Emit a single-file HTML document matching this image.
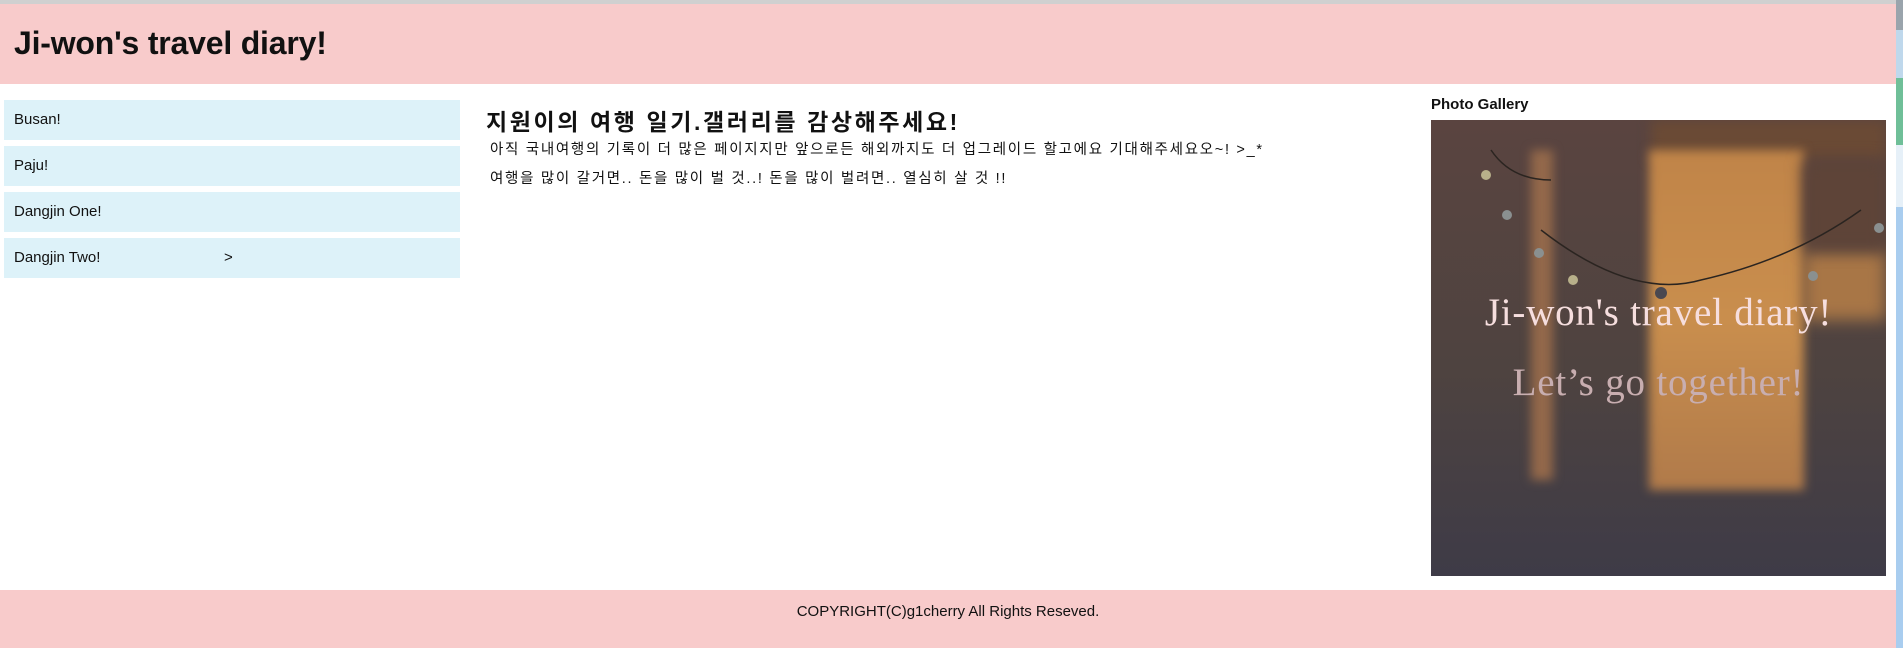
<!DOCTYPE html>
<html><head><meta charset="utf-8"><style>
*{margin:0;padding:0;box-sizing:border-box}
body{width:1903px;height:648px;overflow:hidden;background:#fff;position:relative;font-family:"Liberation Sans","Noto Sans CJK KR",sans-serif;color:#111}
.topline{position:absolute;left:0;top:0;width:1896px;height:4px;background:#d0d0d0}
header{position:absolute;left:0;top:4px;width:1896px;height:80px;background:#f8cbcb}
header h1{position:absolute;left:14px;top:21px;font-size:32px;font-weight:bold;letter-spacing:-0.2px}
.menu{position:absolute;left:4px;width:456px;height:40px;background:#ddf2f9;font-size:15px;padding-left:10px;line-height:40px}
h2{position:absolute;left:486px;top:103px;font-size:23px;font-weight:bold;letter-spacing:2.6px}
p{position:absolute;left:490px;font-size:14.5px;letter-spacing:1.7px}
.pg{position:absolute;left:1431px;top:96px;font-size:15px;font-weight:bold}
.img{position:absolute;left:1431px;top:120px;width:455px;height:456px;overflow:hidden;background:linear-gradient(180deg,#5a4440 0%,#4e4340 55%,#3e3b47 100%)}
.img div{position:absolute}
footer{position:absolute;left:0;top:590px;width:1896px;height:58px;background:#f8cbcb;text-align:center;font-size:15px;line-height:44px}
.sb{position:absolute;left:1896px;top:0;width:7px;height:648px;background:#a9cdef}
</style></head><body>
<div class="topline"></div>
<header><h1>Ji-won's travel diary!</h1></header>
<div class="menu" style="top:100px">Busan!</div>
<div class="menu" style="top:146px">Paju!</div>
<div class="menu" style="top:192px">Dangjin One!</div>
<div class="menu" style="top:238px">Dangjin Two!<span style="position:absolute;left:220px">&gt;</span></div>
<h2>지원이의 여행 일기.갤러리를 감상해주세요!</h2>
<p style="top:138px">아직 국내여행의 기록이 더 많은 페이지지만 앞으로든 해외까지도 더 업그레이드 할고에요 기대해주세요오~! &gt;_*</p>
<p style="top:167px">여행을 많이 갈거면.. 돈을 많이 벌 것..! 돈을 많이 벌려면.. 열심히 살 것 !!</p>
<div class="pg">Photo Gallery</div>
<div class="img">
 <div style="left:220px;top:0;width:235px;height:40px;background:#6a4a35;filter:blur(6px)"></div>
 <div style="left:218px;top:30px;width:155px;height:340px;background:linear-gradient(180deg,#c08448,#c98e4d 50%,#b07a4a);filter:blur(5px)"></div>
 <div style="left:372px;top:130px;width:83px;height:70px;background:#a87646;filter:blur(8px)"></div>
 <div style="left:100px;top:30px;width:22px;height:330px;background:#93684a;filter:blur(5px)"></div>
 <div style="left:372px;top:40px;width:83px;height:90px;background:#5e4438;filter:blur(8px)"></div>
 <svg style="position:absolute;left:0;top:0" width="455" height="456"><path d="M60 30 Q80 60 120 60 M110 110 Q200 180 270 160 Q360 140 430 90" stroke="#2a2420" stroke-width="1.5" fill="none"/>
 <circle cx="55" cy="55" r="5" fill="#b8b08a"/><circle cx="76" cy="95" r="5" fill="#8a9090"/><circle cx="108" cy="133" r="5" fill="#8a9090"/><circle cx="142" cy="160" r="5" fill="#b8b08a"/><circle cx="230" cy="173" r="6" fill="#4a4850"/><circle cx="382" cy="156" r="5" fill="#8a9090"/><circle cx="448" cy="108" r="5" fill="#8a9090"/></svg>
 <div style="left:0;width:455px;top:170px;text-align:center;font-family:'Liberation Serif',serif;font-size:39px;letter-spacing:0.8px;color:#f6dede">Ji-won's travel diary!</div>
 <div style="left:0;width:455px;top:240px;text-align:center;font-family:'Liberation Serif',serif;font-size:39px;letter-spacing:0.8px;color:#c8aeb0">Let’s go together!</div>
</div>
<footer>COPYRIGHT(C)g1cherry All Rights Reseved.</footer>
<div class="sb"><div style="height:30px;background:#9aa4ac"></div><div style="height:48px;background:#bfd8ec"></div><div style="height:67px;background:#6fbf98"></div><div style="height:62px;background:#e6f0f8"></div></div>
</body></html>
